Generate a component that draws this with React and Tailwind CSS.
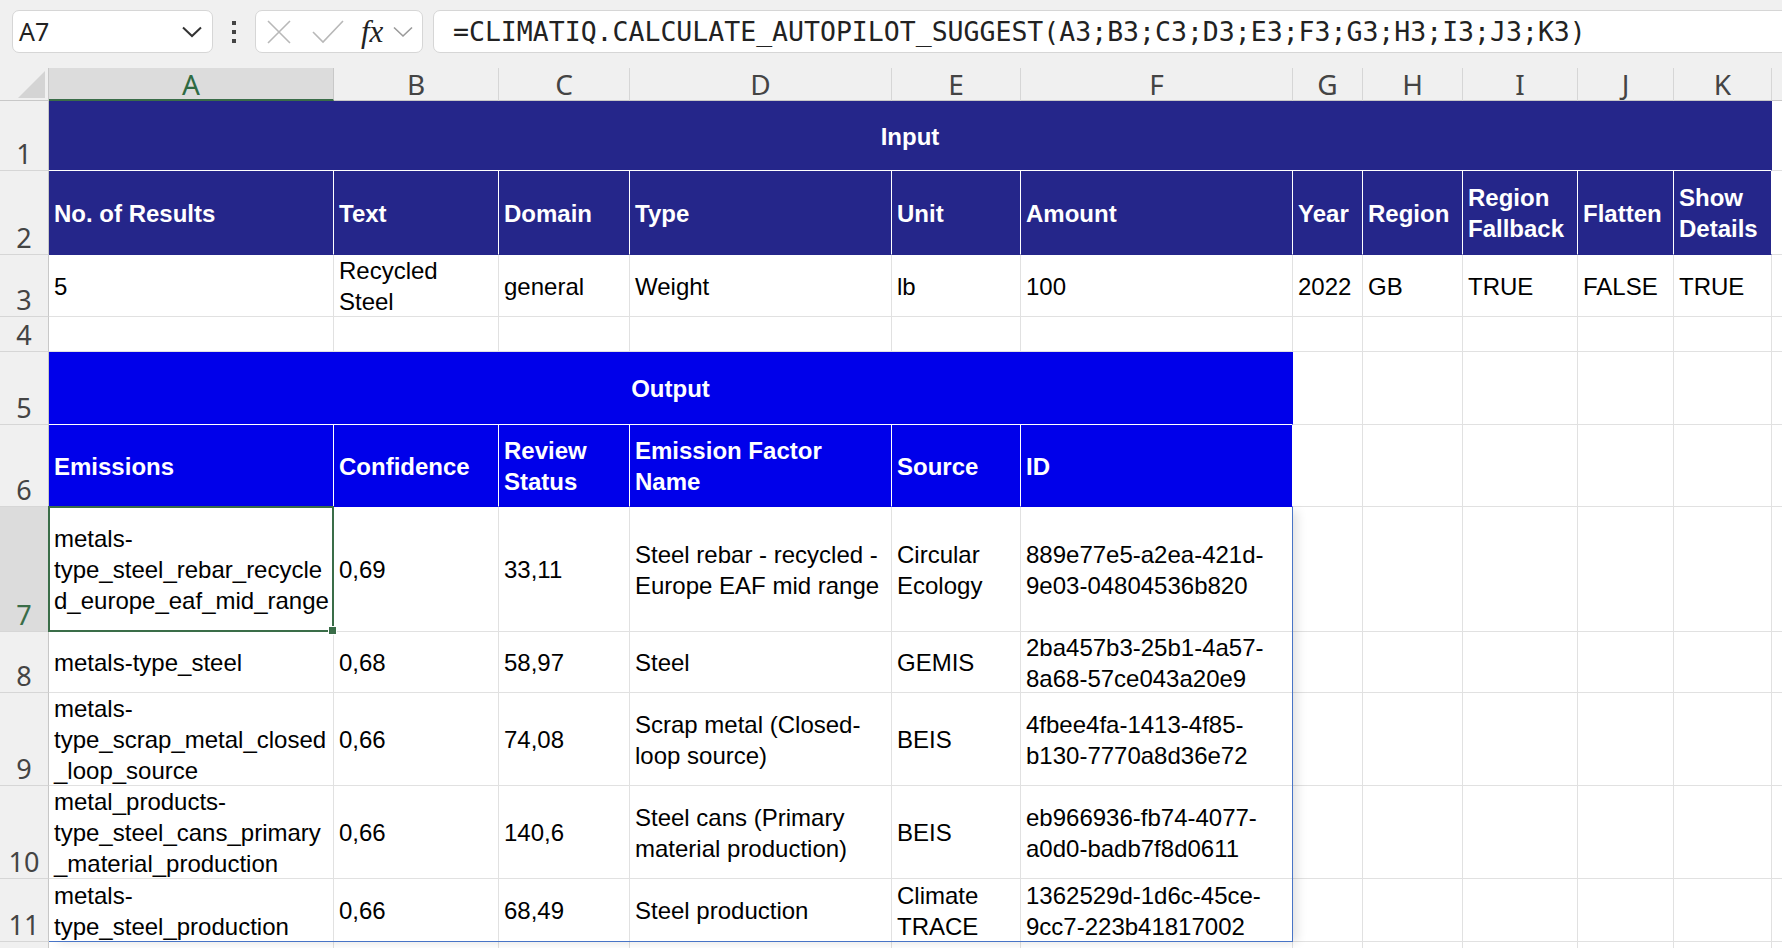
import React from "react";

const NAVY = "bg-[#25268a]";
const BLUE = "bg-[#0000ea]";

const inputHeads = [
  ["No. of Results"], ["Text"], ["Domain"], ["Type"], ["Unit"], ["Amount"],
  ["Year"], ["Region"], ["Region", "Fallback"], ["Flatten"], ["Show", "Details"],
];
const inputVals = [
  ["5"], ["Recycled", "Steel"], ["general"], ["Weight"], ["lb"], ["100"],
  ["2022"], ["GB"], ["TRUE"], ["FALSE"], ["TRUE"],
];
const outputHeads = [
  ["Emissions"], ["Confidence"], ["Review", "Status"], ["Emission Factor", "Name"], ["Source"], ["ID"],
];
const outputRows = [
  [
    ["metals-", "type_steel_rebar_recycle", "d_europe_eaf_mid_range"], ["0,69"], ["33,11"],
    ["Steel rebar - recycled -", "Europe EAF mid range"], ["Circular", "Ecology"],
    ["889e77e5-a2ea-421d-", "9e03-04804536b820"],
  ],
  [
    ["metals-type_steel"], ["0,68"], ["58,97"], ["Steel"], ["GEMIS"],
    ["2ba457b3-25b1-4a57-", "8a68-57ce043a20e9"],
  ],
  [
    ["metals-", "type_scrap_metal_closed", "_loop_source"], ["0,66"], ["74,08"],
    ["Scrap metal (Closed-", "loop source)"], ["BEIS"], ["4fbee4fa-1413-4f85-", "b130-7770a8d36e72"],
  ],
  [
    ["metal_products-", "type_steel_cans_primary", "_material_production"], ["0,66"], ["140,6"],
    ["Steel cans (Primary", "material production)"], ["BEIS"], ["eb966936-fb74-4077-", "a0d0-badb7f8d0611"],
  ],
  [
    ["metals-", "type_steel_production"], ["0,66"], ["68,49"], ["Steel production"],
    ["Climate", "TRACE"], ["1362529d-1d6c-45ce-", "9cc7-223b41817002"],
  ],
];

function Cell({ lines = [], className = "", children }) {
  return (
    <div className={`relative flex flex-col justify-center px-[5px] pt-[1px] border-r border-b whitespace-nowrap text-[24px] leading-[31px] ${className}`}>
      {lines.map((l, i) => (
        <span key={i}>{l}</span>
      ))}
      {children}
    </div>
  );
}

function RowHead({ n, selected }) {
  return (
    <div
      className={`flex items-end justify-center pb-[3px] border-r border-b border-r-[#c8c8c8] border-b-[#d6d6d6] font-['Noto_Sans',sans-serif] text-[27px] leading-none ${
        selected ? "bg-[#dcdcdc] text-[#3a6d48]" : "bg-[#f0f0f0] text-[#444]"
      }`}
    >
      {n}
    </div>
  );
}

function Blank({ n }) {
  return Array.from({ length: n }).map((_, i) => <Cell key={i} className="border-[#e1e1e1]" />);
}

export default function App() {
  const letters = ["A", "B", "C", "D", "E", "F", "G", "H", "I", "J", "K"];

  return (
    <div className="w-[1782px] h-[948px] overflow-hidden bg-white font-['Liberation_Sans',Arial,sans-serif] text-black">
      {/* formula bar */}
      <div className="h-[68px] bg-[#f0f0f0] flex items-start pt-[10px] pl-[12px]">
        <div className="w-[201px] h-[43px] bg-white border border-[#d6d6d6] rounded-[7px] flex items-center justify-between pl-[6px] pr-[10px]">
          <span className="font-['Noto_Sans',sans-serif] text-[25px] text-[#222]">A7</span>
          <svg width="20" height="12" viewBox="0 0 20 12">
            <path d="M1 1.5 L10 10 L19 1.5" fill="none" stroke="#333" strokeWidth="2" />
          </svg>
        </div>
        <div className="w-[42px] h-[43px] flex flex-col items-center justify-center gap-[5px]">
          <span className="w-[4px] h-[4px] bg-[#444]" />
          <span className="w-[4px] h-[4px] bg-[#444]" />
          <span className="w-[4px] h-[4px] bg-[#444]" />
        </div>
        <div className="w-[168px] h-[43px] bg-white border border-[#d6d6d6] rounded-[7px] flex items-center pl-[11px]">
          <svg width="24" height="24" viewBox="0 0 24 24">
            <path d="M1 1 L23 23 M23 1 L1 23" stroke="#b8b8b8" strokeWidth="1.6" />
          </svg>
          <svg width="32" height="24" viewBox="0 0 32 24" className="ml-[21px]">
            <path d="M1 12 L11 22 L31 1" fill="none" stroke="#b8b8b8" strokeWidth="1.6" />
          </svg>
          <span className="ml-[17px] font-['Liberation_Serif',serif] italic text-[31px] leading-none text-[#222]">fx</span>
          <svg width="20" height="12" viewBox="0 0 20 12" className="ml-[10px]">
            <path d="M1 1.5 L10 10 L19 1.5" fill="none" stroke="#9a9a9a" strokeWidth="1.6" />
          </svg>
        </div>
        <div className="flex-1 -mr-4 ml-[10px] h-[43px] bg-white border border-[#d6d6d6] rounded-[7px] flex items-center pl-[19px]">
          <span className="font-['DejaVu_Sans_Mono',monospace] text-[26.5px] text-[#222] whitespace-nowrap">
            =CLIMATIQ.CALCULATE_AUTOPILOT_SUGGEST(A3;B3;C3;D3;E3;F3;G3;H3;I3;J3;K3)
          </span>
        </div>
      </div>

      {/* sheet */}
      <div className="relative grid grid-cols-[49px_285px_165px_131px_262px_129px_272px_70px_100px_115px_96px_98px_60px] grid-rows-[33px_70px_84px_62px_35px_73px_82px_125px_61px_93px_93px_63px_60px]">
        {/* column headers */}
        <div className="bg-[#f0f0f0] border-r border-b border-[#c8c8c8] flex items-end justify-end pr-[3px] pb-[2px]">
          <svg width="27" height="27" viewBox="0 0 27 27">
            <path d="M27 0 L27 27 L0 27 Z" fill="#d4d4d4" />
          </svg>
        </div>
        {letters.map((l) => (
          <div
            key={l}
            className={`flex items-center justify-center font-['Noto_Sans',sans-serif] text-[28px] leading-none ${
              l === "A"
                ? "bg-[#dcdcdc] text-[#2f6b43] border-b-2 border-b-[#3a6d48] border-r border-r-[#c8c8c8]"
                : "bg-[#f0f0f0] text-[#444] border-r border-b border-r-[#d6d6d6] border-b-[#c8c8c8]"
            }`}
          >
            {l}
          </div>
        ))}
        <div className="bg-[#f0f0f0] border-b border-[#c8c8c8]" />

        {/* row 1 */}
        <RowHead n={1} />
        <Cell lines={["Input"]} className={`col-span-11 items-center font-bold text-white ${NAVY} border-white border-r-[#25268a]`} />
        <Cell className="border-[#e1e1e1]" />

        {/* row 2 */}
        <RowHead n={2} />
        {inputHeads.map((h, i) => (
          <Cell key={i} lines={h} className={`font-bold text-white ${NAVY} border-r-white border-b-[#25268a]`} />
        ))}
        <Cell className="border-[#e1e1e1]" />

        {/* row 3 */}
        <RowHead n={3} />
        {inputVals.map((v, i) => (
          <Cell key={i} lines={v} className="border-[#e1e1e1]" />
        ))}
        <Cell className="border-[#e1e1e1]" />

        {/* row 4 */}
        <RowHead n={4} />
        <Blank n={12} />

        {/* row 5 */}
        <RowHead n={5} />
        <Cell lines={["Output"]} className={`col-span-6 items-center font-bold text-white ${BLUE} border-b-white border-r-[#0000ea]`} />
        <Blank n={6} />

        {/* row 6 */}
        <RowHead n={6} />
        {outputHeads.map((h, i) => (
          <Cell key={i} lines={h} className={`font-bold text-white ${BLUE} border-r-white border-b-[#0000ea]`} />
        ))}
        <Blank n={6} />

        {/* rows 7-11 */}
        {outputRows.map((row, r) => (
          <React.Fragment key={r}>
            <RowHead n={7 + r} selected={r === 0} />
            {row.map((v, i) => (
              <Cell key={i} lines={v} className="border-[#e1e1e1]">
                {r === 0 && i === 0 && (
                  <div className="absolute -inset-px z-20 border-2 border-[#3a6d48]">
                    <div className="absolute -right-[5px] -bottom-[5px] w-[9px] h-[9px] bg-[#3a6d48] border border-white" />
                  </div>
                )}
              </Cell>
            ))}
            <Blank n={6} />
          </React.Fragment>
        ))}

        {/* row 12 (cut off by the window) */}
        <RowHead />
        <Blank n={12} />

        {/* spill range outline */}
        <div className="absolute left-[49px] top-[439px] w-[1244px] h-[435px] z-10 pointer-events-none border-r border-b border-[#4874c6] shadow-[6px_2px_10px_-2px_rgba(0,0,0,0.12)]" />
      </div>
    </div>
  );
}
